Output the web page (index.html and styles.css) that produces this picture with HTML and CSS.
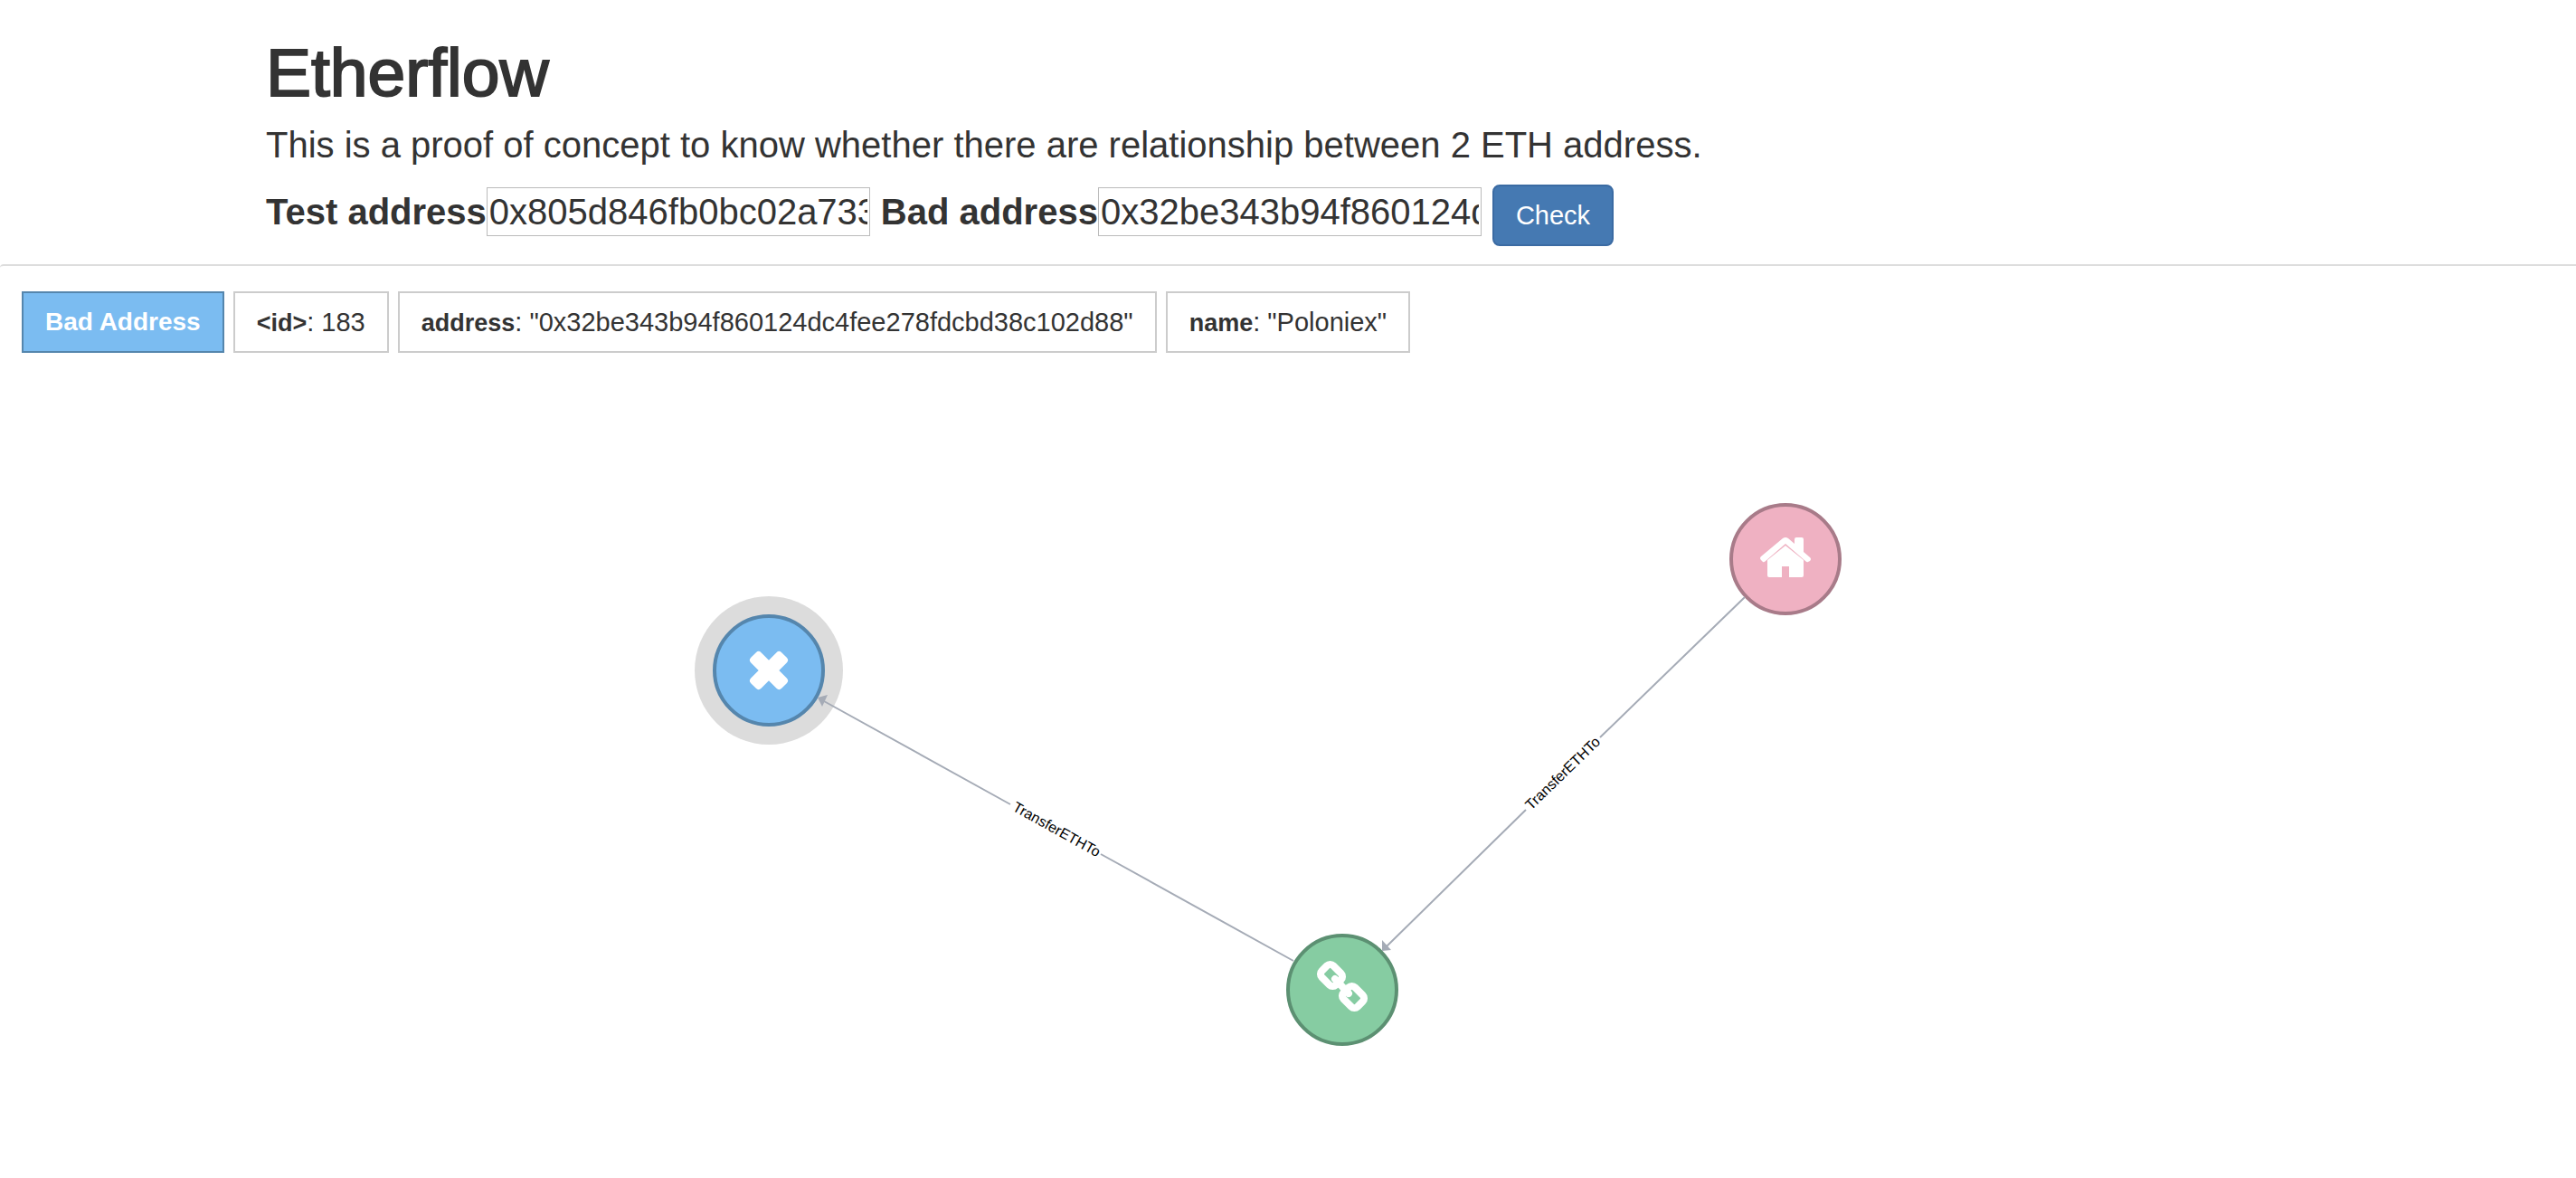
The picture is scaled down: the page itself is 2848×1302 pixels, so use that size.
FILE: index.html
```html
<!DOCTYPE html>
<html lang="en">
<head>
<meta charset="utf-8">
<title>Etherflow</title>
<link rel="stylesheet" href="styles.css">
</head>
<body>
<header class="intro">
  <h1 class="title">Etherflow</h1>
  <p class="lead">This is a proof of concept to know whether there are relationship between 2 ETH address.</p>
  <form class="lookup">
    <div class="field">
      <label for="test-address">Test address</label>
      <input id="test-address" type="text" value="0x805d846fb0bc02a73337">
    </div>
    <div class="field">
      <label for="bad-address">Bad address</label>
      <input id="bad-address" type="text" value="0x32be343b94f860124dc4fee278fdcbd38c102d88">
    </div>
    <button class="check" type="button">Check</button>
  </form>
</header>
<main class="graph">
  <div class="info">
    <span class="tag tag-label">Bad Address</span>
    <span class="tag"><strong>&lt;id&gt;</strong>: 183</span>
    <span class="tag"><strong>address</strong>: "0x32be343b94f860124dc4fee278fdcbd38c102d88"</span>
    <span class="tag"><strong>name</strong>: "Poloniex"</span>
  </div>
  <svg class="canvas" viewBox="0 390 2848 912">
    <g class="node node-bad" transform="translate(850 741)">
      <circle class="halo" r="82"/>
      <circle class="disc" r="60"/>
      <g class="icon" transform="rotate(45)">
        <rect x="-24" y="-8" width="48" height="16" rx="4"/>
        <rect x="-8" y="-24" width="16" height="48" rx="4"/>
      </g>
    </g>
    <g class="node node-test" transform="translate(1974 618)">
      <circle class="disc" r="60"/>
      <path class="icon" d="M0 -15L20 1V18Q20 20 18 20H4V8H-4V20H-18Q-20 20 -20 18V1Z"/>
      <path class="icon" d="M-3 -23Q0 -25 3 -23L10 -17V-22Q10 -24 12 -24H18Q20 -24 20 -22V-8L27 -2Q29 0 27 2L25 3Q24 4 22 2L0 -17L-22 2Q-24 4 -25 3L-27 1Q-29 -1 -27 -3Z"/>
    </g>
    <g class="node node-link" transform="translate(1484 1094)">
      <circle class="disc" r="60"/>
      <g class="chain">
        <rect x="-11" y="-9" width="22" height="18" rx="5" transform="translate(-12 -16) rotate(45)"/>
        <rect x="-11" y="-9" width="22" height="18" rx="5" transform="translate(12 8) rotate(45)"/>
        <path d="M-8 -12L7 4"/>
      </g>
    </g>
    <g class="relation">
      <path d="M1430 1062L1217 944M1117 889L911 775"/>
      <path class="head" d="M904 771L915 768L909 781Z"/>
      <text transform="translate(1168 917) rotate(29)" y="5">TransferETHTo</text>
    </g>
    <g class="relation">
      <path d="M1929 660L1769 815M1687 895L1533 1046"/>
      <path class="head" d="M1528 1051L1528 1039L1538 1050Z"/>
      <text transform="translate(1728 855) rotate(-44)" y="5">TransferETHTo</text>
    </g>
  </svg>
</main>
</body>
</html>
```
FILE: styles.css
```css
* { box-sizing: border-box; }

body {
  margin: 0;
  min-height: 100vh;
  display: flex;
  flex-direction: column;
  background: #fff;
  color: #333;
  font-family: "Helvetica Neue", "Liberation Sans", Arial, sans-serif;
  font-size: 29px;
  line-height: 40px;
}

.intro {
  width: 100%;
  max-width: 2260px;
  margin: 0 auto;
  padding: 40px 0 20px;
  font-size: 40px;
  line-height: 60px;
}

.title {
  margin: 0 0 10px;
  font-size: 75px;
  font-weight: 400;
  line-height: 80px;
  -webkit-text-stroke: 2px #333;
}

.lead { margin: 0 0 14px; }

.lookup {
  display: flex;
  flex-wrap: wrap;
  align-items: flex-start;
  gap: 12px;
}

.field {
  display: flex;
  align-items: center;
  padding-top: 3px;
  line-height: 54px;
}

.field label { font-weight: 700; }

.field input {
  width: 424px;
  height: 54px;
  padding: 0 2px;
  border: 1px solid #bbb;
  color: #333;
  font: inherit;
}

.check {
  padding: 12px 24px;
  border: 2px solid #3b6ba3;
  border-radius: 8px;
  background: #4579b2;
  color: #fff;
  font: inherit;
  font-size: 29px;
  line-height: 40px;
}

.graph {
  flex: 1;
  display: flex;
  flex-direction: column;
  border-top: 2px solid #ddd;
  border-radius: 4px 0 0 0;
}

.info {
  display: flex;
  flex-wrap: wrap;
  gap: 10px;
  padding: 28px 24px 0;
}

.tag {
  padding: 12px 24px;
  border: 2px solid #ccc;
}

.tag strong {
  font-size: 27px;
  line-height: 1;
}

.tag-label {
  border-color: #5586ad;
  background: #7bbcf1;
  color: #fff;
  font-size: 28px;
  font-weight: 700;
}

.canvas { display: block; width: 100%; height: auto; }

.relation path { fill: none; stroke: #a5abb6; stroke-width: 2; }
.relation .head { fill: #a5abb6; stroke: none; }
.relation text { fill: #000; font-size: 16px; text-anchor: middle; }

.halo { fill: #dcdcdc; }
.disc { stroke-width: 4; }
.node-bad .disc { fill: #7bbcf1; stroke: #5586ad; }
.node-test .disc { fill: #efb1c2; stroke: #a87b89; }
.node-link .disc { fill: #86cca2; stroke: #5c9072; }

.icon { fill: #fff; }
.chain { fill: none; stroke: #fff; stroke-width: 8; stroke-linecap: round; }
```
